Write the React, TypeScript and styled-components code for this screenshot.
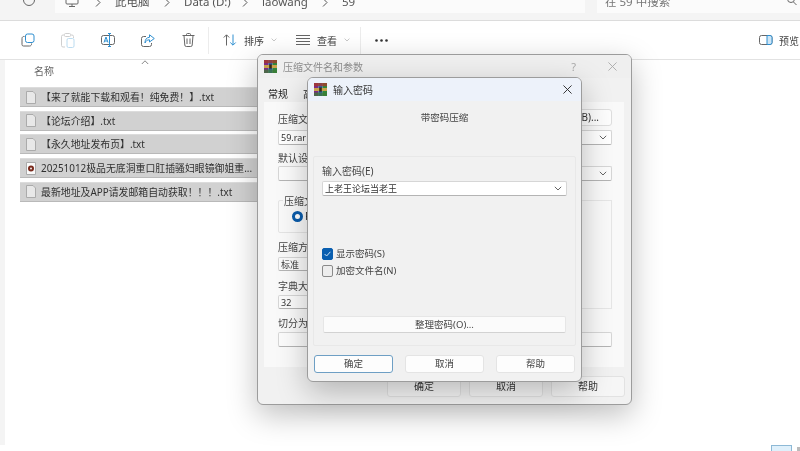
import React from "react";
import styled, { createGlobalStyle } from "styled-components";

const Global = createGlobalStyle`
  html, body { margin: 0; padding: 0; background: #fff; }
  body { width: 800px; height: 451px; overflow: hidden; font-family: "Noto Sans", "Noto Sans CJK SC", sans-serif; color: #333; }
  * { box-sizing: border-box; }
`;

const Page = styled.div`
  position: relative;
  width: 800px;
  height: 451px;
  overflow: hidden;
  background: #fff;
  filter: blur(0.35px);
  display: flex;
  flex-direction: column;
`;

const AddressBar = styled.div`
  height: 21px;
  flex: none;
  display: flex;
  background: #f4f4f4;
  border-bottom: 1px solid #dcdcdc;
  overflow: hidden;
`;
const BackSlot = styled.div`
  width: 55px;
  flex: none;
  display: flex;
  justify-content: center;
  padding-left: 3px;
  margin-top: -7px;
`;
const PathField = styled.div`
  width: 530px;
  height: 13px;
  background: #fbfbfb;
  display: flex;
  align-items: flex-end;
  padding-left: 10px;
  overflow: hidden;
`;
const PcIcon = styled.svg`
  flex: none;
  align-self: flex-start;
  margin-right: 16px;
`;
const Crumb = styled.span<{ $w: number }>`
  width: ${(p) => p.$w}px;
  flex: none;
  font-size: 11.5px;
  line-height: 16px;
  color: #555;
  white-space: nowrap;
  margin-bottom: 3px;
`;
const CrumbChevron = styled.svg`
  flex: none;
  margin: 0 14px 6px 0;
`;
const SearchField = styled.div`
  margin-left: 12px;
  width: 203px;
  height: 13px;
  background: #fbfbfb;
  display: flex;
  align-items: flex-end;
  justify-content: space-between;
  padding: 0 3px 0 8px;
  font-size: 11.5px;
  line-height: 16px;
  color: #777;
  overflow: hidden;
  white-space: nowrap;
`;
const SearchText = styled.span`
  margin-bottom: 3px;
`;
const SearchIcon = styled.svg`
  margin-bottom: 6px;
`;

const Toolbar = styled.div`
  height: 39px;
  flex: none;
  display: flex;
  align-items: center;
  padding-left: 8px;
  background: #fff;
  border-bottom: 1px solid #e2e2e2;
`;
const ToolIcon = styled.div`
  width: 40px;
  flex: none;
  display: flex;
  justify-content: center;
  align-items: center;
`;
const Sep = styled.div`
  width: 1px;
  height: 27px;
  background: #ececec;
  flex: none;
`;
const ToolItem = styled.div<{ $w: number }>`
  width: ${(p) => p.$w}px;
  flex: none;
  display: flex;
  align-items: center;
  gap: 7px;
  font-size: 10px;
  color: #444;
  padding-left: 14px;
`;
const Preview = styled.div`
  margin-left: auto;
  display: flex;
  align-items: center;
  gap: 6px;
  font-size: 10px;
  color: #444;
  white-space: nowrap;
  width: 41px;
  overflow: hidden;
  flex: none;
`;
const PreviewIcon = styled.svg`
  flex: none;
`;

const Body = styled.div`
  flex: 1;
  display: flex;
  min-height: 0;
`;
const Side = styled.div`
  width: 5px;
  flex: none;
  background: #f4f4f4;
  height: 385px;
`;
const FileArea = styled.div`
  flex: 1;
  display: flex;
  flex-direction: column;
  padding: 0 0 0 15px;
`;
const HeadRow = styled.div`
  position: relative;
  height: 27px;
  padding: 3px 0 0 14px;
  font-size: 10px;
  line-height: 16px;
  color: #666;
`;
const SortMark = styled.svg`
  position: absolute;
  left: 121px;
  top: 0;
`;
const FileList = styled.div`
  width: 240px;
  display: flex;
  flex-direction: column;
  gap: 3.7px;
`;
const FileRow = styled.div`
  height: 20px;
  background: #d1d1d1;
  border-bottom: 1px solid #b9b9b9;
  border-top: 1px solid #dcdcdc;
  display: flex;
  align-items: center;
  padding-left: 6px;
  gap: 5px;
  font-size: 9.9px;
  color: #303030;
  white-space: nowrap;
  overflow: hidden;
`;
const FileIcon = styled.svg`
  flex: none;
`;
const ViewButtons = styled.div`
  position: absolute;
  right: 8px;
  bottom: 0;
  width: 21px;
  height: 6px;
  background: #dff0fb;
  border: 1px solid #8db9d6;
  border-bottom: none;
`;
const ViewButtonNext = styled.div`
  position: absolute;
  right: 0;
  bottom: 0;
  width: 3px;
  height: 4px;
  background: #bbb;
`;

const Win = styled.div<{ $l: number; $t: number; $w: number; $h: number }>`
  position: absolute;
  left: ${(p) => p.$l}px;
  top: ${(p) => p.$t}px;
  width: ${(p) => p.$w}px;
  height: ${(p) => p.$h}px;
  border-radius: 6px;
  background: #f1f1f1;
  border: 1px solid #9c9c9c;
  box-shadow: 0 10px 30px rgba(0, 0, 0, 0.25);
  display: flex;
  flex-direction: column;
  font-size: 10px;
  overflow: hidden;
`;
const BackTitle = styled.div`
  height: 23px;
  flex: none;
  display: flex;
  align-items: center;
  padding: 0 14px 0 6px;
  gap: 6px;
  color: #8e8e8e;
  background: #efefef;
`;
const Grow = styled.span`
  flex: 1;
`;
const Help = styled.span`
  font-size: 11px;
  color: #aaa;
  margin-right: 26px;
`;
const Tabs = styled.div`
  height: 24px;
  flex: none;
  padding: 9px 0 0 10px;
  color: #222;
  font-size: 10px;
  line-height: 14px;
  display: flex;
  gap: 15px;
`;
const TabPanel = styled.div`
  margin: 0 7px 0 6px;
  height: 265px;
  flex: none;
  background: #f9f9f9;
  padding: 7px 12px 0 14px;
  display: flex;
  flex-direction: column;
`;
const LabelRow = styled.div`
  display: flex;
  justify-content: space-between;
  align-items: flex-end;
  height: 17px;
  margin-bottom: 4px;
`;
const FieldLabel = styled.div<{ $mt?: number }>`
  font-size: 10px;
  line-height: 13px;
  color: #444;
  margin-top: ${(p) => p.$mt ?? 0}px;
`;
const SmallBtn = styled.div`
  width: 64px;
  height: 17px;
  background: #fdfdfd;
  border: 1px solid #dedede;
  border-radius: 3px;
  text-align: right;
  padding-right: 12px;
  line-height: 15px;
`;
const Field = styled.div<{ $mt?: number; $h?: number; $bright?: boolean }>`
  margin-top: ${(p) => p.$mt ?? 0}px;
  height: ${(p) => p.$h ?? 15}px;
  background: ${(p) => (p.$bright ? "#fff" : "#fbfbfb")};
  border: 1px solid #d6d6d6;
  border-bottom-color: #b4b4b4;
  border-radius: 2px;
  display: flex;
  align-items: center;
  justify-content: space-between;
  padding: 0 4px 0 2px;
  color: #333;
  font-size: 9px;
  flex: none;
`;
const TwoCols = styled.div`
  margin-top: 19px;
  display: flex;
  gap: 8px;
`;
const LeftCol = styled.div`
  width: 140px;
  display: flex;
  flex-direction: column;
`;
const RightGroup = styled.div`
  flex: 1;
  height: 109px;
  border: 1px solid #e6e6e6;
`;
const MiniGroup = styled.div`
  height: 33px;
  border: 1px solid #e4e4e4;
  border-radius: 2px;
  padding: 10px 0 0 13px;
  position: relative;
  display: flex;
  gap: 2px;
  line-height: 11px;
`;
const MiniLegend = styled.span`
  position: absolute;
  left: 4px;
  top: -6px;
  background: #f9f9f9;
  line-height: 12px;
  color: #444;
  padding: 0 1px;
`;
const Radio = styled.div`
  width: 11px;
  height: 11px;
  border-radius: 50%;
  border: 3px solid #0a5cab;
  background: #fff;
`;
const BackFooter = styled.div`
  display: flex;
  justify-content: flex-end;
  gap: 8px;
  padding: 9px 6px 0 0;
`;
const BackBtn = styled.div`
  width: 74px;
  height: 21px;
  background: #f6f6f6;
  border: 1px solid #e2e2e2;
  border-radius: 3px;
  text-align: center;
  line-height: 19px;
  font-size: 10px;
  color: #333;
`;

const FrontTitle = styled.div`
  height: 23px;
  flex: none;
  display: flex;
  align-items: center;
  padding: 0 9px 0 6px;
  gap: 6px;
  background: #edf2fa;
  color: #333;
`;
const Note = styled.div`
  height: 33px;
  flex: none;
  text-align: center;
  padding-top: 10px;
  margin-bottom: 22px;
  line-height: 14px;
  font-size: 9.5px;
  color: #444;
`;
const Group = styled.div`
  margin: 0 5px;
  height: 190px;
  flex: none;
  border: 1px solid #e8e8e8;
  border-radius: 2px;
  padding: 8px 8px 0 8px;
  display: flex;
  flex-direction: column;
`;
const GroupLabel = styled.div`
  line-height: 13px;
  height: 16px;
  font-size: 10px;
  color: #444;
`;
const CheckRow = styled.div<{ $mt: number }>`
  display: flex;
  align-items: center;
  gap: 3px;
  margin-top: ${(p) => p.$mt}px;
  font-size: 9.5px;
  line-height: 12px;
  color: #444;
`;
const Box = styled.div<{ $on?: boolean }>`
  width: 11px;
  height: 12px;
  border-radius: 2px;
  flex: none;
  background: ${(p) => (p.$on ? "#0a5fb0" : "#ededed")};
  border: 1px solid ${(p) => (p.$on ? "#0a5fb0" : "#8a8a8a")};
  display: flex;
  align-items: center;
  justify-content: center;
`;
const ManageBtn = styled.div`
  margin: 39px 1px 0 1px;
  height: 17px;
  background: #fbfbfb;
  border: 1px solid #e6e6e6;
  border-bottom-color: #d2d2d2;
  border-radius: 2px;
  text-align: center;
  line-height: 15px;
  font-size: 9.5px;
  color: #444;
`;
const FrontFooter = styled.div`
  display: flex;
  justify-content: space-between;
  padding: 9px 6px 0 6px;
`;
const FrontBtn = styled.div<{ $primary?: boolean }>`
  width: 79px;
  height: 18px;
  background: #fdfdfd;
  border: 1px solid ${(p) => (p.$primary ? "#6e9fc4" : "#e4e4e4")};
  border-radius: 3px;
  text-align: center;
  line-height: 16px;
  font-size: 9.5px;
  color: #444;
`;

const RarIcon = () => (
  <svg width="13" height="13" viewBox="0 0 13 13">
    <rect x="0" y="0" width="4.4" height="13" fill="#7d2a86" />
    <rect x="4.4" y="0" width="4.2" height="13" fill="#2d5db0" />
    <rect x="8.6" y="0" width="4.4" height="13" fill="#2f8a3c" />
    <rect x="0" y="0" width="13" height="3.2" fill="#a53a2a" opacity="0.8" />
    <rect x="0" y="9.5" width="13" height="3.5" fill="#3d7a35" opacity="0.75" />
    <rect x="0" y="5" width="13" height="3" fill="#c9a24a" />
    <rect x="5.2" y="4.4" width="2.6" height="4.2" fill="#3a2a12" />
  </svg>
);

const Close = ({ c, s }: { c: string; s: number }) => (
  <svg width={s} height={s} viewBox="0 0 10 10">
    <path d="M.5.5l9 9M9.5.5l-9 9" stroke={c} strokeWidth="1" fill="none" />
  </svg>
);

const Chev = ({ c = "#666", w = 8 }: { c?: string; w?: number }) => (
  <svg width={w} height={(w * 5) / 8} viewBox="0 0 8 5">
    <path d="M.8.8L4 4l3.2-3.2" stroke={c} fill="none" strokeWidth="1" />
  </svg>
);

const Crumbsep = () => (
  <CrumbChevron width="6" height="9" viewBox="0 0 6 9">
    <path d="M1 .5l4 4-4 4" stroke="#555" fill="none" />
  </CrumbChevron>
);

const Txt = () => (
  <FileIcon width="10" height="13" viewBox="0 0 10 13">
    <path d="M.5.5h6.5l2.500 2.500v9.500h-9z" fill="#e8e8e8" stroke="#ababab" />
  </FileIcon>
);
const Media = () => (
  <FileIcon width="10" height="13" viewBox="0 0 10 13">
    <path d="M.5.5h9v12h-9z" fill="#fafafa" stroke="#ababab" />
    <circle cx="5" cy="6.5" r="3" fill="#7a2a1c" />
    <circle cx="5" cy="6.5" r="1" fill="#eee" />
  </FileIcon>
);

const files = ["【来了就能下载和观看！纯免费！】.txt", "【论坛介绍】.txt", "【永久地址发布页】.txt"];

export default function App() {
  return (
    <Page>
      <Global />
      <AddressBar>
        <BackSlot>
          <svg width="14" height="14" viewBox="0 0 14 14">
            <circle cx="7" cy="7" r="5.5" stroke="#666" fill="none" />
          </svg>
        </BackSlot>
        <PathField>
          <PcIcon width="14" height="8" viewBox="0 0 14 8">
            <rect x="1" y="-5" width="12" height="9" rx="1" stroke="#666" fill="none" />
            <path d="M4 6.500h6M7 4v2" stroke="#666" />
          </PcIcon>
          <Crumbsep />
          <Crumb $w={49}>此电脑</Crumb>
          <Crumbsep />
          <Crumb $w={58}>Data (D:)</Crumb>
          <Crumbsep />
          <Crumb $w={60}>laowang</Crumb>
          <Crumbsep />
          <Crumb $w={20}>59</Crumb>
        </PathField>
        <SearchField>
          <SearchText>在 59 中搜索</SearchText>
          <SearchIcon width="10" height="10" viewBox="0 0 10 10">
            <circle cx="4" cy="2" r="3.500" stroke="#666" fill="none" />
            <path d="M6.500 5l3 3" stroke="#666" />
          </SearchIcon>
        </SearchField>
      </AddressBar>
      <Toolbar>
        <ToolIcon>
          <svg width="14" height="14" viewBox="0 0 14 14" fill="none">
            <rect x="4.500" y="1" width="8.500" height="8.500" rx="2" stroke="#2f8fd0" />
            <path d="M3.500 3.500A2 2 0 0 0 1 5.500v6A1.500 1.500 0 0 0 2.500 13h6a2 2 0 0 0 2-2.500" stroke="#666" />
          </svg>
        </ToolIcon>
        <ToolIcon>
          <svg width="14" height="15" viewBox="0 0 14 15" fill="none">
            <path d="M3 2H2A1.500 1.500 0 0 0 .5 3.500v9A1.500 1.500 0 0 0 2 14h2M10 2h1a1.500 1.500 0 0 1 1.500 1.500V5" stroke="#cfcfcf" />
            <rect x="3.500" y=".5" width="6" height="3" rx="1" stroke="#cfcfcf" />
            <rect x="6" y="5.500" width="7" height="9" rx="1.500" stroke="#bcdcf0" />
          </svg>
        </ToolIcon>
        <ToolIcon>
          <svg width="14" height="14" viewBox="0 0 14 14" fill="none">
            <rect x=".5" y="2.500" width="13" height="9" rx="2" stroke="#666" />
            <path d="M8.500.5v13M7 .5h3M7 13.500h3" stroke="#2f8fd0" />
            <path d="M3 9.500l2-5.500 2 5.500M3.700 8h2.600" stroke="#2f8fd0" />
          </svg>
        </ToolIcon>
        <ToolIcon>
          <svg width="14" height="13" viewBox="0 0 14 13" fill="none">
            <path d="M5 2.500H2.500a2 2 0 0 0-2 2v6a2 2 0 0 0 2 2h6a2 2 0 0 0 2-2V9" stroke="#666" />
            <path d="M8.500.8L13.300 4.500 8.500 8V5.800C6 5.800 4.800 7 4 9c0-3.500 1.500-5.500 4.500-5.700z" stroke="#2f8fd0" />
          </svg>
        </ToolIcon>
        <ToolIcon>
          <svg width="13" height="14" viewBox="0 0 13 14" fill="none" stroke="#666">
            <path d="M.5 2.500h12M4.500 2.500V1.500a1 1 0 0 1 1-1h2a1 1 0 0 1 1 1v1M2 2.500l.8 9.500a1.500 1.500 0 0 0 1.500 1.500h4.400a1.500 1.500 0 0 0 1.500-1.500l.8-9.500M5 5.500v5.500M8 5.500v5.500" />
          </svg>
        </ToolIcon>
        <Sep />
        <ToolItem $w={73}>
          <svg width="14" height="12" viewBox="0 0 14 12" fill="none">
            <path d="M3.500 11.500V1M.8 3.500L3.500.8l2.700 2.700" stroke="#666" />
            <path d="M10 .5V11M7.300 8.500L10 11.200l2.700-2.700" stroke="#2f8fd0" />
          </svg>
          <span>排序</span>
          <Chev c="#b5b5b5" w={6} />
        </ToolItem>
        <ToolItem $w={78}>
          <svg width="14" height="10" viewBox="0 0 14 10" stroke="#666">
            <path d="M0 .5h14M0 3.500h14M0 6.500h14M0 9.500h14" />
          </svg>
          <span>查看</span>
          <Chev c="#b5b5b5" w={6} />
        </ToolItem>
        <Sep />
        <ToolItem $w={50}>
          <svg width="13" height="3" viewBox="0 0 13 3" fill="#333">
            <circle cx="1.500" cy="1.500" r="1.300" />
            <circle cx="6.500" cy="1.500" r="1.300" />
            <circle cx="11.500" cy="1.500" r="1.300" />
          </svg>
        </ToolItem>
        <Preview>
          <PreviewIcon width="14" height="10" viewBox="0 0 14 10" fill="none">
            <rect x=".5" y=".5" width="12.500" height="9" rx="2" stroke="#666" />
            <path d="M8 .5h3a2 2 0 0 1 2 2v5a2 2 0 0 1-2 2H8z" fill="#cfe6f6" stroke="#2f8fd0" />
          </PreviewIcon>
          <span>预览</span>
        </Preview>
      </Toolbar>
      <Body>
        <Side />
        <FileArea>
          <HeadRow>
            名称
            <SortMark width="8" height="5" viewBox="0 0 8 5">
              <path d="M.8 4L4 .8 7.200 4" stroke="#888" fill="none" />
            </SortMark>
          </HeadRow>
          <FileList>
            {files.map((f) => (
              <FileRow key={f}>
                <Txt />
                <span>{f}</span>
              </FileRow>
            ))}
            <FileRow>
              <Media />
              <span>20251012极品无底洞重口肛插骚妇眼镜御姐重...</span>
            </FileRow>
            <FileRow>
              <Txt />
              <span>最新地址及APP请发邮箱自动获取！！！.txt</span>
            </FileRow>
          </FileList>
        </FileArea>
      </Body>
      <ViewButtons />
      <ViewButtonNext />

      <Win $l={257} $t={54} $w={375} $h={351}>
        <BackTitle>
          <RarIcon />
          <span>压缩文件名和参数</span>
          <Grow />
          <Help>?</Help>
          <Close c="#a8a8a8" s={9} />
        </BackTitle>
        <Tabs>
          <span>常规</span>
          <span>高级</span>
        </Tabs>
        <TabPanel>
          <LabelRow>
            <FieldLabel>压缩文件名(A)</FieldLabel>
            <SmallBtn>(B)...</SmallBtn>
          </LabelRow>
          <Field $bright>
            <span>59.rar</span>
            <Chev />
          </Field>
          <FieldLabel $mt={7}>默认设置</FieldLabel>
          <Field $mt={1}>
            <span />
            <Chev />
          </Field>
          <TwoCols>
            <LeftCol>
              <MiniGroup>
                <MiniLegend>压缩文件格式</MiniLegend>
                <Radio />
                <span>RAR</span>
              </MiniGroup>
              <FieldLabel $mt={8}>压缩方式</FieldLabel>
              <Field $mt={3} $h={14}>标准</Field>
              <FieldLabel $mt={9}>字典大小</FieldLabel>
              <Field $mt={2} $h={14}>32</Field>
            </LeftCol>
            <RightGroup />
          </TwoCols>
          <FieldLabel $mt={8}>切分为分卷</FieldLabel>
          <Field $mt={2}>
            <span />
          </Field>
        </TabPanel>
        <BackFooter>
          <BackBtn>确定</BackBtn>
          <BackBtn>取消</BackBtn>
          <BackBtn>帮助</BackBtn>
        </BackFooter>
      </Win>

      <Win $l={307} $t={77} $w={275} $h={305}>
        <FrontTitle>
          <RarIcon />
          <span>输入密码</span>
          <Grow />
          <Close c="#222" s={9} />
        </FrontTitle>
        <Note>带密码压缩</Note>
        <Group>
          <GroupLabel>输入密码(E)</GroupLabel>
          <Field $bright>
            <span>上老王论坛当老王</span>
            <Chev />
          </Field>
          <CheckRow $mt={52}>
            <Box $on>
              <svg width="7" height="6" viewBox="0 0 7 6">
                <path d="M.6 3l2 2L6.400.8" stroke="#cfe4f5" fill="none" />
              </svg>
            </Box>
            <span>显示密码(S)</span>
          </CheckRow>
          <CheckRow $mt={5}>
            <Box />
            <span>加密文件名(N)</span>
          </CheckRow>
          <ManageBtn>整理密码(O)...</ManageBtn>
        </Group>
        <FrontFooter>
          <FrontBtn $primary>确定</FrontBtn>
          <FrontBtn>取消</FrontBtn>
          <FrontBtn>帮助</FrontBtn>
        </FrontFooter>
      </Win>
    </Page>
  );
}
